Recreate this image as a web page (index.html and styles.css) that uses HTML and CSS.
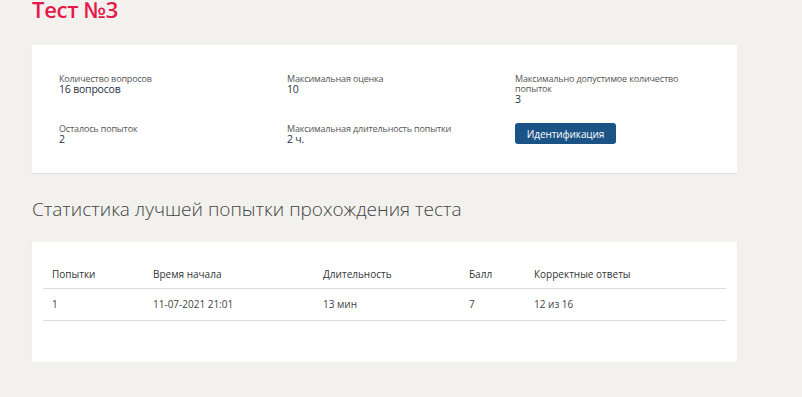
FILE: index.html
```html
<!DOCTYPE html>
<html lang="ru">
<head>
<meta charset="utf-8">
<link rel="stylesheet" href="styles.css">
</head>
<body>
<div class="page">
  <h1 class="title">Тест №3</h1>
  <div class="card info">
    <div class="item">
      <div class="label">Количество вопросов</div>
      <div class="value">16 вопросов</div>
    </div>
    <div class="item">
      <div class="label">Максимальная оценка</div>
      <div class="value">10</div>
    </div>
    <div class="item">
      <div class="label">Максимально допустимое количество<br>попыток</div>
      <div class="value">3</div>
    </div>
    <div class="item">
      <div class="label">Осталось попыток</div>
      <div class="value">2</div>
    </div>
    <div class="item">
      <div class="label">Максимальная длительность попытки</div>
      <div class="value">2 ч.</div>
    </div>
    <div class="item">
      <button class="btn">Идентификация</button>
    </div>
  </div>
  <h2 class="subtitle">Статистика лучшей попытки прохождения теста</h2>
  <div class="card stats">
    <table class="table">
      <thead>
        <tr><th class="c1">Попытки</th><th class="c2">Время начала</th><th class="c3">Длительность</th><th class="c4">Балл</th><th>Корректные ответы</th></tr>
      </thead>
      <tbody>
        <tr><td>1</td><td>11-07-2021 21:01</td><td>13 мин</td><td>7</td><td>12 из 16</td></tr>
      </tbody>
    </table>
  </div>
</div>
</body>
</html>
```
FILE: styles.css
```css
html, body {
  margin: 0;
  padding: 0;
  background: #f2f1ee;
  font-family: "Open Sans", "Noto Sans", sans-serif;
  color: #333;
}
.page {
  width: 705px;
  padding-left: 32px;
}
.title {
  margin: -4px 0 0;
  font-size: 22px;
  line-height: 26px;
  font-weight: 600;
  color: #e4194a;
  letter-spacing: -0.3px;
}
.card {
  background: #fff;
  box-shadow: 0 1px 1px rgba(0,0,0,0.08);
}
.info {
  margin-top: 23px;
  height: 128px;
  box-sizing: border-box;
  padding: 29px 27px 0;
  display: grid;
  grid-template-columns: 228px 228px 1fr;
  grid-template-rows: 50px 39px;
}
.label {
  font-size: 9px;
  line-height: 10px;
  letter-spacing: -0.15px;
  color: #555;
}
.value {
  font-size: 10.5px;
  line-height: 11px;
  letter-spacing: -0.2px;
  color: #1f3347;
}
.btn {
  display: block;
  margin: -1px 0 0;
  background: #1c5386;
  color: #fff;
  border: 0;
  border-radius: 3px;
  font-family: "Open Sans", sans-serif;
  font-size: 10px;
  letter-spacing: -0.1px;
  height: 21px;
  width: 101px;
  padding: 0;
  cursor: pointer;
}
.subtitle {
  margin: 24px 0 0;
  font-size: 19px;
  line-height: 24px;
  font-weight: 300;
  color: #444;
}
.stats {
  margin-top: 21px;
  height: 120px;
  box-sizing: border-box;
  padding: 20px 11px 0;
}
.table {
  width: 683px;
  border-collapse: collapse;
  font-size: 10px;
  color: #333;
}
.table th {
  font-weight: 400;
  text-align: left;
  padding: 4px 9px 6px;
  height: 16px;
  border-bottom: 1px solid #dedede;
}
.table td {
  text-align: left;
  padding: 7px 9px 8px;
  height: 16px;
  border-bottom: 1px solid #dedede;
  color: #444;
}
.c1 { width: 83px; }
.c2 { width: 152px; }
.c3 { width: 128px; }
.c4 { width: 47px; }
```
